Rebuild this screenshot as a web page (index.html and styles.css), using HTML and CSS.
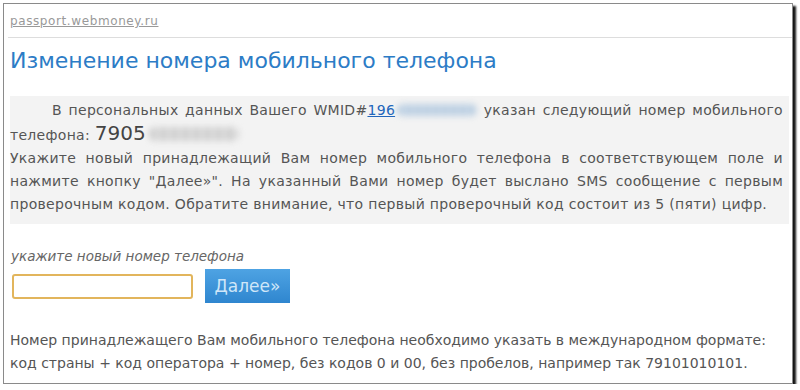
FILE: index.html
```html
<!DOCTYPE html>
<html lang="ru">
<head>
<meta charset="utf-8">
<title>Изменение номера мобильного телефона</title>
<link rel="stylesheet" href="styles.css">
</head>
<body>
<div class="frame">
  <div class="site"><a href="#" class="site-link">passport.webmoney.ru</a></div>
  <h1 class="title">Изменение номера мобильного телефона</h1>
  <div class="info">
    <p class="info-p first">В персональных данных Вашего WMID#<a href="#" class="wmid">196</a><span class="blur blue" aria-hidden="true"></span> указан следующий номер мобильного телефона: <span class="phone">7905</span><span class="blur gray" aria-hidden="true"></span></p>
    <p class="info-p">Укажите новый принадлежащий Вам номер мобильного телефона в соответствующем поле и нажмите кнопку "Далее»". На указанный Вами номер будет выслано SMS сообщение с первым проверочным кодом. Обратите внимание, что первый проверочный код состоит из 5 (пяти) цифр.</p>
  </div>
  <div class="form">
    <label class="label" for="phone">укажите новый номер телефона</label>
    <div class="form-row">
      <input id="phone" class="input" type="text">
      <button class="btn" type="button">Далее»</button>
    </div>
  </div>
  <p class="note">Номер принадлежащего Вам мобильного телефона необходимо указать в международном формате: код страны + код оператора + номер, без кодов 0 и 00, без пробелов, например так 79101010101.</p>
</div>
</body>
</html>
```

FILE: styles.css
```css
html, body {
  margin: 0;
  padding: 0;
  background: #fff;
}
body {
  font-family: "DejaVu Sans", Verdana, sans-serif;
  font-size: 14px;
  color: #555;
}
.frame {
  box-sizing: border-box;
  margin: 3px 0 0 3px;
  width: 790px;
  height: 381px;
  border: 1px solid #8a8a8a;
  box-shadow: 3px 3px 2px #151515;
  padding: 0 0 0 4px;
  background: #fff;
}
.site {
  height: 34px;
  border-bottom: 1px solid #ddd;
  padding: 10px 0 0 2px;
  box-sizing: border-box;
  font-size: 12px;
  letter-spacing: 0.6px;
}
.site-link {
  color: #999;
  text-decoration: underline;
}
.title {
  margin: 10px 0 0 2px;
  font-size: 22px;
  font-weight: normal;
  color: #2c7cc6;
  line-height: 26px;
}
.info {
  margin: 22px 0 0 2px;
  width: 779px;
  background: #f3f3f3;
  padding: 3px 6px 8px 0;
  box-sizing: border-box;
}
.info-p {
  margin: 0;
  line-height: 23px;
  text-align: justify;
  letter-spacing: 0.3px;
}
.first {
  text-indent: 42px;
}
.wmid {
  color: #2266bb;
}
.blur {
  display: inline-block;
  height: 12px;
  border-radius: 6px;
  filter: blur(3px);
  vertical-align: -1px;
}
.blue {
  width: 80px;
  margin-left: 2px;
  background: repeating-linear-gradient(90deg, #b6cbe0 0 6px, #d2dfeb 6px 9px);
}
.gray {
  width: 90px;
  margin-left: 3px;
  height: 14px;
  background: repeating-linear-gradient(90deg, #cdcdcd 0 7px, #e2e2e2 7px 11px);
}
.phone {
  font-size: 20px;
  color: #444;
  letter-spacing: 0;
}
.form {
  margin: 24px 0 0 3px;
}
.label {
  display: block;
  font-style: italic;
  font-size: 13.5px;
  color: #666;
  line-height: 16px;
}
.form-row {
  display: flex;
  align-items: center;
  gap: 12px;
  margin-top: 5px;
}
.input {
  box-sizing: border-box;
  width: 181px;
  height: 25px;
  margin: 0 0 0 1px;
  border: 2px solid #e2b55c;
  border-radius: 3px;
  background: #fff;
}
.btn {
  box-sizing: border-box;
  width: 85px;
  height: 34px;
  border: none;
  background: linear-gradient(#4ea3e3, #2f86cf);
  color: #cfe6f8;
  font-family: "DejaVu Sans", Verdana, sans-serif;
  font-size: 17px;
  padding: 0;
}
.note {
  margin: 26px 0 0 2px;
  line-height: 23px;
}
```
